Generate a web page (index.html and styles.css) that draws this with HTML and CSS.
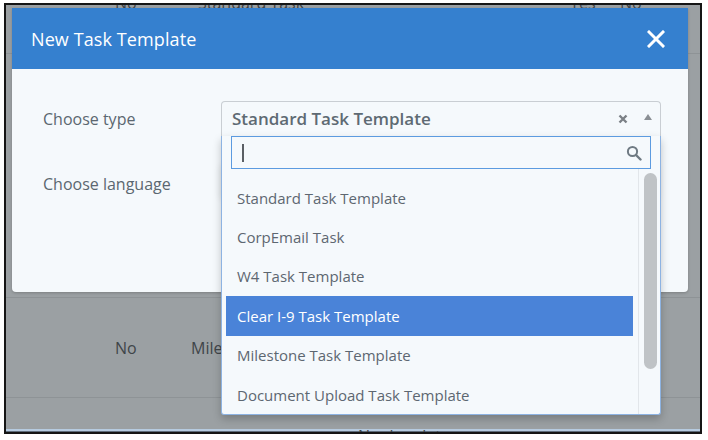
FILE: index.html
```html
<!DOCTYPE html>
<html lang="en">
<head>
<meta charset="utf-8">
<title>New Task Template</title>
<link rel="stylesheet" href="styles.css">
</head>
<body>
<div class="frame">
  <div class="screen">
    <div class="bg-table">
      <div class="bg-row row-top">
        <span>No</span><span class="shift">Standard Task</span><span></span><span>Yes</span><span>No</span>
      </div>
      <div class="bg-row row-hidden"></div>
      <div class="bg-row row-mid">
        <span>No</span><span>Milestone Task</span><span></span><span></span><span></span>
      </div>
      <div class="bg-row row-low">
        <span></span><span></span><span>No due date</span><span></span><span></span>
      </div>
    </div>

    <div class="modal">
      <div class="modal-header">
        <h1 class="modal-title">New Task Template</h1>
        <svg class="close" width="18" height="18" viewBox="0 0 18 18"><path d="M2 2L16 16M16 2L2 16" stroke="#fff" stroke-width="3" stroke-linecap="square"/></svg>
      </div>
      <div class="modal-body">
        <div class="form-row">
          <label class="label">Choose type</label>
          <div class="select open">
            <div class="select-box">
              <span class="select-value">Standard Task Template</span>
              <svg class="clear" width="10" height="10" viewBox="0 0 10 10"><path d="M1.5 1.5L8.5 8.5M8.5 1.5L1.5 8.5" stroke="#7b8086" stroke-width="2.4"/></svg>
              <svg class="arrow" width="8" height="6" viewBox="0 0 8 6"><path d="M4 0L8 6H0Z" fill="#8a8f94"/></svg>
            </div>
            <div class="dropdown">
              <div class="search-wrap">
                <div class="search">
                  <span class="caret"></span>
                  <svg class="search-icon" width="16" height="16" viewBox="0 0 16 16"><circle cx="6.5" cy="6.5" r="4.6" fill="none" stroke="#6f7a83" stroke-width="2"/><path d="M10 10L14.5 14.5" stroke="#6f7a83" stroke-width="2.4" stroke-linecap="round"/></svg>
                </div>
              </div>
              <div class="list-area">
                <ul class="options">
                  <li>Standard Task Template</li>
                  <li>CorpEmail Task</li>
                  <li>W4 Task Template</li>
                  <li class="active">Clear I-9 Task Template</li>
                  <li>Milestone Task Template</li>
                  <li>Document Upload Task Template</li>
                </ul>
                <div class="track"><div class="thumb"></div></div>
              </div>
            </div>
          </div>
        </div>
        <div class="form-row">
          <label class="label">Choose language</label>
          <div class="select">
            <div class="select-box"></div>
          </div>
        </div>
      </div>
    </div>
  </div>
</div>
</body>
</html>
```
FILE: styles.css
```css
html, body {
  margin: 0;
  padding: 0;
  background: #ffffff;
}
body {
  font-family: "Open Sans", "Liberation Sans", sans-serif;
}
.frame {
  margin: 3px 0 0 4px;
  width: 694px;
  border: 2px solid #151515;
}
.screen {
  position: relative;
  width: 694px;
  height: 427px;
  overflow: hidden;
  background: #9ba0a3;
  box-shadow: inset 0 -1px 0 #5f6d7b, inset 0 -3px 0 #b6cbe0;
}

/* background table */
.bg-table {
  margin-top: -52px;
}
.bg-row {
  display: grid;
  grid-template-columns: 76px 167px 212px 50px 1fr;
  padding-left: 109px;
  align-items: center;
  font-size: 16px;
  color: #3f4549;
  white-space: nowrap;
  border-bottom: 1px solid #8e9396;
}
.row-top { height: 100px; }
.row-top .shift { padding-left: 7px; }
.row-hidden { height: 243px; }
.row-mid { height: 99px; }
.row-low {
  align-items: start;
  padding-top: 27px;
  border-bottom: 0;
}

/* modal */
.modal {
  position: absolute;
  left: 6px;
  top: 3px;
  width: 676px;
  border-radius: 0 0 4px 4px;
  background: #f5f9fc;
  box-shadow: 0 1px 3px rgba(0,0,0,0.2);
}
.modal-header {
  height: 61px;
  background: #3580cf;
  display: flex;
  align-items: center;
  justify-content: space-between;
  padding: 0 23px 0 19px;
}
.modal-title {
  margin: 0;
  font-family: "Open Sans", sans-serif;
  font-weight: 400;
  font-size: 18px;
  color: #ffffff;
  letter-spacing: 0.1px;
}
.modal-body {
  height: 223px;
  padding: 32px 0 0 31px;
  box-sizing: border-box;
}
.form-row {
  display: grid;
  grid-template-columns: 178px 440px;
  align-items: center;
  margin-bottom: 29px;
}
.label {
  font-size: 16px;
  color: #5b6770;
}
.form-row + .form-row .label {
  margin-top: 2px;
}

/* select */
.select {
  position: relative;
}
.select-box {
  height: 35px;
  box-sizing: border-box;
  border: 1px solid #c9ced3;
  border-radius: 4px;
  background: #f5f9fc;
  display: flex;
  align-items: center;
  padding: 0 8px 0 10px;
  box-shadow: -2px 0 6px rgba(0,0,0,0.06);
}
.select.open .select-box {
  border-bottom: 0;
  border-radius: 4px 4px 0 0;
  box-shadow: none;
}
.select-value {
  flex: 1;
  font-size: 17px;
  font-weight: 600;
  color: #5e6a73;
  margin-top: -1px;
}
.clear {
  margin-right: 16px;
}
.arrow {
  margin-top: -4px;
}

.dropdown {
  position: absolute;
  left: 0;
  right: 0;
  top: 35px;
  z-index: 5;
  background: #f5f9fc;
  border: 1px solid #8db3e2;
  border-top: 0;
  border-radius: 0 0 3px 3px;
  box-shadow: 0 4px 8px rgba(0,0,0,0.22);
}
.search-wrap {
  padding: 0 9px;
}
.search {
  height: 33px;
  box-sizing: border-box;
  border: 1px solid #5c9be0;
  display: flex;
  align-items: center;
  justify-content: space-between;
  padding: 0 8px 0 10px;
}
.caret {
  width: 2px;
  height: 18px;
  background: #5a5f64;
}
.search-icon {
  margin-top: 1px;
}
.list-area {
  display: flex;
  height: 245px;
}
.options {
  list-style: none;
  margin: 0;
  padding: 9px 0 0 4px;
  width: 407px;
}
.options li {
  height: 39.4px;
  display: flex;
  align-items: center;
  padding-left: 11px;
  font-size: 15px;
  color: #5d6771;
}
.options li.active {
  background: #4a83d8;
  color: #ffffff;
}
.track {
  margin-left: 5px;
  width: 22px;
  border-left: 1px solid #e2e6ea;
  box-sizing: border-box;
  padding: 4px 0 0 5px;
}
.thumb {
  width: 13px;
  height: 196px;
  border-radius: 7px;
  background: #bfc3c6;
}
```
